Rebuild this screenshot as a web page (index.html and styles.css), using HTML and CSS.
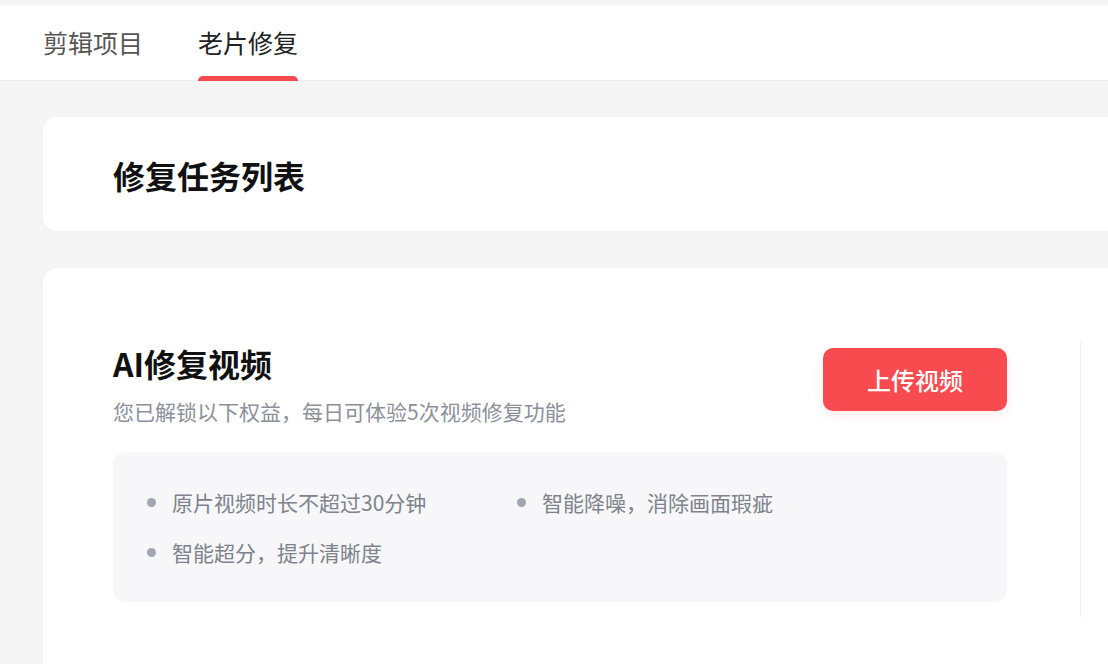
FILE: index.html
```html
<!DOCTYPE html>
<html lang="zh-CN">
<head>
    <meta charset="UTF-8">
    <meta name="viewport" content="width=device-width, initial-scale=1.0">
    <title>老片修复</title>
    <link rel="stylesheet" href="styles.css">
</head>
<body>
    <nav class="tabbar">
        <a href="#" class="tab">剪辑项目</a>
        <a href="#" class="tab active">老片修复</a>
    </nav>

    <div class="main-content">
        <div class="card task-card">
            <h2>修复任务列表</h2>
        </div>

        <div class="card repair-card">
            <div class="repair-main">
                <div class="repair-head">
                    <div>
                        <h3>AI修复视频</h3>
                        <div class="subtitle">您已解锁以下权益，每日可体验5次视频修复功能</div>
                    </div>
                    <button type="button">上传视频</button>
                </div>
                <ul class="perks">
                    <li>原片视频时长不超过30分钟</li>
                    <li>智能降噪，消除画面瑕疵</li>
                    <li>智能超分，提升清晰度</li>
                </ul>
            </div>
            <div class="repair-side"></div>
        </div>
    </div>
</body>
</html>
```

FILE: styles.css
```css
body {
    font-family: "Noto Sans CJK SC", "Noto Sans", sans-serif;
    background: #f5f5f6;
    margin: 0;
    overflow: hidden;
}
.tabbar {
    background-color: #fff;
    height: 81px;
    border-top: 5px solid #f4f4f5;
    box-sizing: border-box;
    border-bottom: 1px solid #ececee;
    display: flex;
    gap: 55px;
    padding-left: 43px;
}
.tab {
    position: relative;
    color: #555;
    font-size: 25px;
    line-height: 76px;
    height: 76px;
    margin-top: -1px;
    text-decoration: none;
}
.tab.active {
    color: #222;
}
.tab.active::after {
    content: "";
    position: absolute;
    left: 0;
    right: 0;
    bottom: -1px;
    height: 5px;
    border-radius: 5px 5px 0 0;
    background-color: #f24a4f;
}
.main-content {
    width: 1240px;
    padding: 36px 0 0 43px;
    display: flex;
    flex-direction: column;
    gap: 37px;
}
.card {
    background-color: #fff;
    border-radius: 14px;
    box-shadow: 0 2px 10px rgba(0, 0, 0, 0.02);
}
.task-card {
    height: 114px;
    display: flex;
    align-items: center;
    padding-left: 70px;
}
h2 {
    margin: 0;
    font-size: 32px;
    font-weight: bold;
    color: #111;
    margin-top: 2px;
}
.repair-card {
    height: 520px;
    display: flex;
    padding-left: 70px;
}
.repair-main {
    width: 894px;
    padding-top: 76px;
}
.repair-head {
    display: flex;
    justify-content: space-between;
    align-items: flex-start;
}
h3 {
    margin: 0;
    font-size: 32px;
    line-height: 38px;
    font-weight: bold;
    color: #111;
}
.subtitle {
    margin-top: 15px;
    font-size: 21px;
    line-height: 28px;
    color: #8b909a;
}
button {
    margin-top: 4px;
    width: 184px;
    height: 63px;
    border: none;
    border-radius: 10px;
    background-color: #f84b50;
    color: #fff;
    font-family: inherit;
    font-size: 24px;
    font-weight: 500;
    cursor: pointer;
    box-shadow: 0 4px 12px rgba(248, 75, 80, 0.12);
}
.perks {
    list-style: none;
    margin: 27px 0 0;
    padding: 36px 34px;
    background-color: #f7f7f9;
    border-radius: 12px;
    display: grid;
    grid-template-columns: 370px 370px;
    row-gap: 22px;
}
.perks li {
    display: flex;
    align-items: center;
    gap: 16px;
    font-size: 21px;
    line-height: 28px;
    color: #7d828c;
}
.perks li::before {
    content: "";
    width: 9px;
    height: 9px;
    border-radius: 50%;
    background-color: #a0a6b2;
}
.repair-side {
    margin: 72px 0 0 73px;
    height: 277px;
    border-left: 1px solid #eef0f3;
}
```
